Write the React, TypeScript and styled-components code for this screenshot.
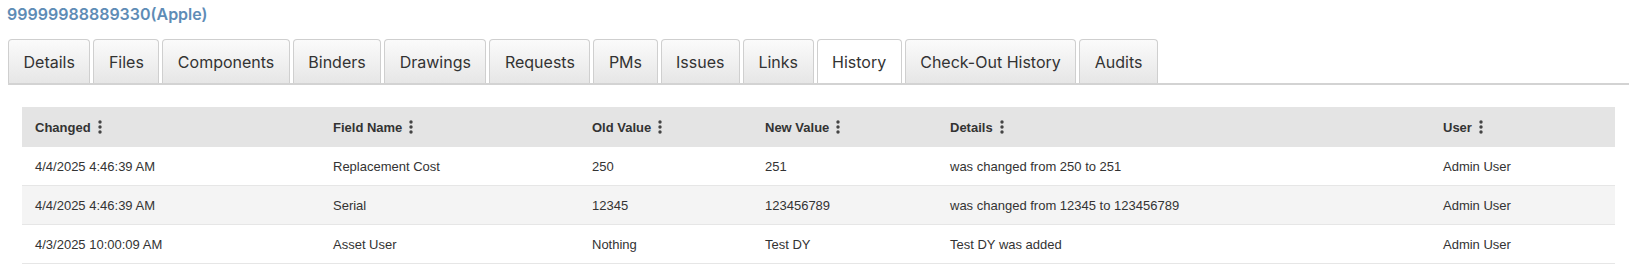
import styled, { createGlobalStyle } from "styled-components";

const GlobalStyle = createGlobalStyle`
  body {
    margin: 0;
    background: #fff;
    font-family: "Liberation Sans", Arial, sans-serif;
  }
`;

const tabs = [
  "Details",
  "Files",
  "Components",
  "Binders",
  "Drawings",
  "Requests",
  "PMs",
  "Issues",
  "Links",
  "History",
  "Check-Out History",
  "Audits",
];

const columns = [
  { title: "Changed", width: 298 },
  { title: "Field Name", width: 259 },
  { title: "Old Value", width: 173 },
  { title: "New Value", width: 185 },
  { title: "Details", width: 493 },
  { title: "User", width: 185 },
];

const rows = [
  ["4/4/2025 4:46:39 AM", "Replacement Cost", "250", "251", "was changed from 250 to 251", "Admin User"],
  ["4/4/2025 4:46:39 AM", "Serial", "12345", "123456789", "was changed from 12345 to 123456789", "Admin User"],
  ["4/3/2025 10:00:09 AM", "Asset User", "Nothing", "Test DY", "Test DY was added", "Admin User"],
];

const Kebab = () => (
  <StyledKebab width="4" height="14" viewBox="0 0 4 14">
    <circle cx="2" cy="2" r="1.7" />
    <circle cx="2" cy="7" r="1.7" />
    <circle cx="2" cy="12" r="1.7" />
  </StyledKebab>
);

const App = () => {
  return (
    <StyledPage>
      <GlobalStyle />
      <StyledTitle>99999988889330(Apple)</StyledTitle>
      <StyledTabBar>
        {tabs.map((t) => (
          <StyledTab key={t} $active={t === "History"}>
            {t}
          </StyledTab>
        ))}
      </StyledTabBar>
      <StyledTableWrap>
        <StyledTable>
          <colgroup>
            {columns.map((c) => (
              <col key={c.title} width={c.width} />
            ))}
          </colgroup>
          <thead>
            <tr>
              {columns.map((c) => (
                <StyledHeadCell key={c.title}>
                  <StyledHeadInner>
                    {c.title}
                    <Kebab />
                  </StyledHeadInner>
                </StyledHeadCell>
              ))}
            </tr>
          </thead>
          <tbody>
            {rows.map((r, i) => (
              <StyledRow key={i} $striped={i % 2 === 1}>
                {r.map((v, j) => (
                  <StyledCell key={j}>{v}</StyledCell>
                ))}
              </StyledRow>
            ))}
          </tbody>
        </StyledTable>
      </StyledTableWrap>
    </StyledPage>
  );
};

export default App;

const StyledPage = styled.div`
  display: flex;
  flex-flow: column nowrap;
  padding-top: 4px;
`;

const StyledTitle = styled.div`
  padding-left: 7px;
  font-family: Inter, "Liberation Sans", sans-serif;
  font-weight: 600;
  font-size: 16px;
  line-height: 20px;
  color: rgb(94, 140, 182);
`;

const StyledTabBar = styled.div`
  display: flex;
  flex-flow: row nowrap;
  gap: 3px;
  margin: 15px 0 0 8px;
  border-bottom: 2px solid #d3d3d3;
`;

const StyledTab = styled.div<{ $active?: boolean }>`
  height: 44px;
  box-sizing: border-box;
  padding: 0 14.5px;
  display: flex;
  align-items: center;
  border: 1px solid #cfcfcf;
  border-bottom: none;
  border-radius: 4px 4px 0 0;
  font-family: Inter, "Liberation Sans", sans-serif;
  font-size: 16px;
  color: #333;
  background: ${(p) =>
    p.$active ? "#fff" : "linear-gradient(to bottom, #fbfbfb, #e6e6e6)"};
`;

const StyledTableWrap = styled.div`
  margin: 22px 14px 0 22px;
`;

const StyledTable = styled.table`
  width: 100%;
  border-collapse: collapse;
  table-layout: fixed;
  font-size: 13px;
  color: #333;
`;

const StyledHeadCell = styled.th`
  height: 40px;
  padding: 0 13px;
  text-align: left;
  font-weight: 700;
  background: #e4e4e4;
`;

const StyledHeadInner = styled.span`
  display: inline-flex;
  align-items: center;
  gap: 7px;
`;

const StyledKebab = styled.svg`
  fill: #444;
`;

const StyledRow = styled.tr<{ $striped?: boolean }>`
  background: ${(p) => (p.$striped ? "#f4f4f4" : "#fff")};
  border-bottom: 1px solid #e6e6e6;
`;

const StyledCell = styled.td`
  height: 38px;
  padding: 0 13px;
  white-space: nowrap;
`;
